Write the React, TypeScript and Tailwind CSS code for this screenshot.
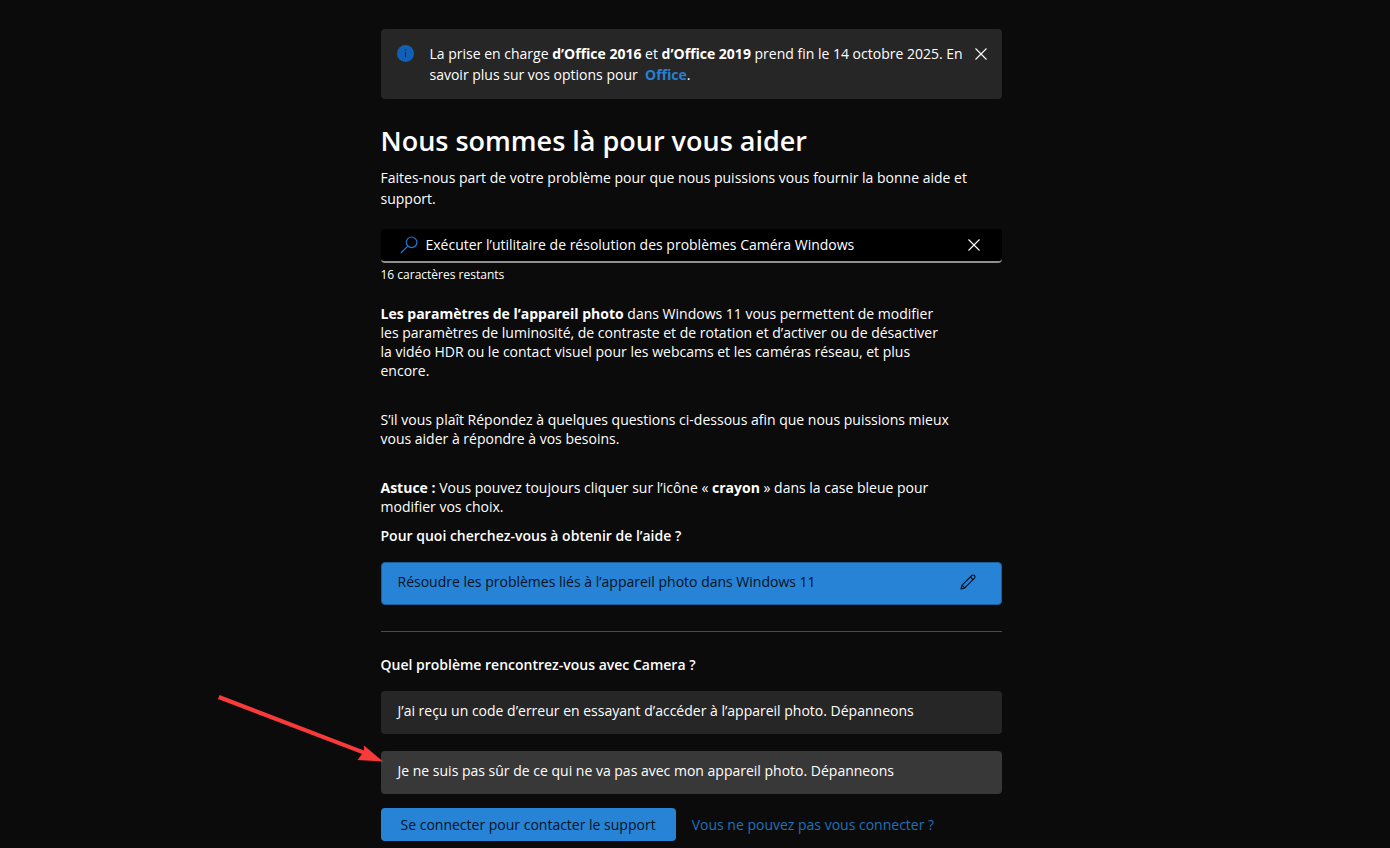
import { ReactNode, useState } from "react";
import clsx from "clsx";

const QUERY_MAX_LENGTH = 80;

const options = [
  { id: "code", label: "J’ai reçu un code d’erreur en essayant d’accéder à l’appareil photo. Dépanneons" },
  { id: "unsure", label: "Je ne suis pas sûr de ce qui ne va pas avec mon appareil photo. Dépanneons" },
];

const CloseIcon = () => (
  <svg viewBox="0 0 12 12" className="h-3 w-3" stroke="currentColor" strokeWidth="1.1" fill="none" aria-hidden="true">
    <path d="M0.5 0.5 11.5 11.5M11.5 0.5 0.5 11.5" />
  </svg>
);

const InfoIcon = () => (
  <svg viewBox="0 0 17 17" className="h-[17px] w-[17px] shrink-0" aria-hidden="true">
    <circle cx="8.5" cy="8.5" r="8.5" fill="#1160b7" />
    <path d="M8.5 7v5.2" stroke="#0b2a52" strokeWidth="1.1" />
    <circle cx="8.5" cy="5" r="0.8" fill="#0b2a52" />
  </svg>
);

const SearchIcon = () => (
  <svg viewBox="0 0 18 18" className="h-[18px] w-[18px] shrink-0" stroke="#1f78cf" strokeWidth="1.2" fill="none" aria-hidden="true">
    <circle cx="11.6" cy="6.3" r="5.3" />
    <path d="M7.8 10.1 0.8 17" />
  </svg>
);

const PencilIcon = () => (
  <svg viewBox="0 0 16 16" className="h-4 w-4 shrink-0" stroke="currentColor" strokeWidth="1.1" fill="none" strokeLinejoin="round" aria-hidden="true">
    <path d="M1 15 2.1 11.2 11.8 1.5a1.9 1.9 0 0 1 2.7 0 1.9 1.9 0 0 1 0 2.7L4.8 13.9 1 15Z" />
    <path d="M2.1 11.2 4.8 13.9M10.4 2.9 13.1 5.6" />
  </svg>
);

const PointerArrow = () => (
  <svg
    viewBox="0 0 166 70"
    className="pointer-events-none absolute -top-14 right-full h-[70px] w-[166px] translate-x-0.5"
    fill="#f93a3a"
    aria-hidden="true"
  >
    <path d="M2.5 0 1 4 145 59 140.500 65 166 66.500 147 50.500 147 55.500 Z" />
  </svg>
);

const Question = ({ children }: { children: ReactNode }) => (
  <h2 className="text-sm leading-5 font-semibold">{children}</h2>
);

const App = () => {
  const [query, setQuery] = useState("Exécuter l’utilitaire de résolution des problèmes Caméra Windows");
  const [showNotice, setShowNotice] = useState(true);
  const [selected, setSelected] = useState("unsure");

  return (
    <div className="min-h-screen bg-[#0b0b0b] pt-[29px] pr-2 font-['Open_Sans','Noto_Sans',sans-serif] text-sm text-white">
      <main className="mx-auto w-full max-w-[621px]">
        {/* Retirement notice */}
        {showNotice && (
          <div role="status" className="flex items-start rounded-sm bg-[#262626] py-[14px] pr-[15px] pl-4">
            <div className="flex h-[21px] items-center">
              <InfoIcon />
            </div>
            <p className="ml-4 flex-1 leading-[21px]">
              La prise en charge <strong>d’Office 2016</strong> et <strong>d’Office 2019</strong> prend fin le 14 octobre 2025. En
              savoir plus sur vos options pour &nbsp;
              <a href="#office" className="font-bold text-[#2681d3]">Office</a>.
            </p>
            <button type="button" aria-label="Fermer" onClick={() => setShowNotice(false)} className="flex h-[21px] items-center">
              <CloseIcon />
            </button>
          </div>
        )}

        <h1 className="mt-6 text-[27px] leading-9 font-semibold">Nous sommes là pour vous aider</h1>
        <p className="mt-2 max-w-[600px] leading-[21px]">
          Faites-nous part de votre problème pour que nous puissions vous fournir la bonne aide et support.
        </p>

        {/* Search */}
        <div className="mt-5 flex h-[34px] items-center rounded-sm border-b-2 border-[#8f8f8f] bg-black pr-[22px] pl-[19px]">
          <SearchIcon />
          <input
            type="text"
            aria-label="Décrivez votre problème"
            value={query}
            maxLength={QUERY_MAX_LENGTH}
            onChange={(e) => setQuery(e.target.value)}
            className="ml-2 min-w-0 flex-1 bg-transparent outline-none"
          />
          <button type="button" aria-label="Effacer" onClick={() => setQuery("")}>
            <CloseIcon />
          </button>
        </div>
        <p className="mt-[3px] text-xs leading-[18px]">{QUERY_MAX_LENGTH - query.length} caractères restants</p>

        {/* Answer */}
        <div className="mt-5 max-w-[570px] space-y-[30px] leading-[19px]">
          <p>
            <strong>Les paramètres de l’appareil photo</strong> dans Windows 11 vous permettent de modifier les paramètres de
            luminosité, de contraste et de rotation et d’activer ou de désactiver la vidéo HDR ou le contact visuel pour les
            webcams et les caméras réseau, et plus encore.
          </p>
          <p>
            S’il vous plaît Répondez à quelques questions ci-dessous afin que nous puissions mieux vous aider à répondre à vos
            besoins.
          </p>
          <p>
            <strong>Astuce :</strong> Vous pouvez toujours cliquer sur l’icône « <strong>crayon</strong> » dans la case bleue
            pour modifier vos choix.
          </p>
        </div>

        <div className="mt-[10px]">
          <Question>Pour quoi cherchez-vous à obtenir de l’aide ?</Question>
          <button
            type="button"
            className="mt-4 flex h-[43px] w-full items-center justify-between rounded-sm border border-[#1b5f9c] bg-[#2783d5] pr-[25px] pb-[3px] pl-4 text-left text-[#06121f]"
          >
            Résoudre les problèmes liés à l’appareil photo dans Windows 11
            <PencilIcon />
          </button>
        </div>

        <hr className="mt-[26px] border-[#4a4a4a]" />

        <div className="mt-[23px]">
          <Question>Quel problème rencontrez-vous avec Camera ?</Question>
          <ul className="mt-4 space-y-[17px]">
            {options.map((option) => (
              <li key={option.id} className="relative">
                <button
                  type="button"
                  onClick={() => setSelected(option.id)}
                  className={clsx(
                    "flex h-[43px] w-full items-center rounded-sm pb-[3px] pl-[17px] text-left",
                    selected === option.id ? "bg-[#383838]" : "bg-[#262626]"
                  )}
                >
                  {option.label}
                </button>
                {selected === option.id && <PointerArrow />}
              </li>
            ))}
          </ul>
        </div>

        {/* Sign-in actions */}
        <div className="mt-[14px] flex items-center gap-4 pb-[7px]">
          <button type="button" className="h-[33px] rounded-sm bg-[#2783d5] px-5 text-[#06121f]">
            Se connecter pour contacter le support
          </button>
          <a href="#connexion" className="text-[#2270b8]">Vous ne pouvez pas vous connecter ?</a>
        </div>
      </main>
    </div>
  );
};

export default App;
